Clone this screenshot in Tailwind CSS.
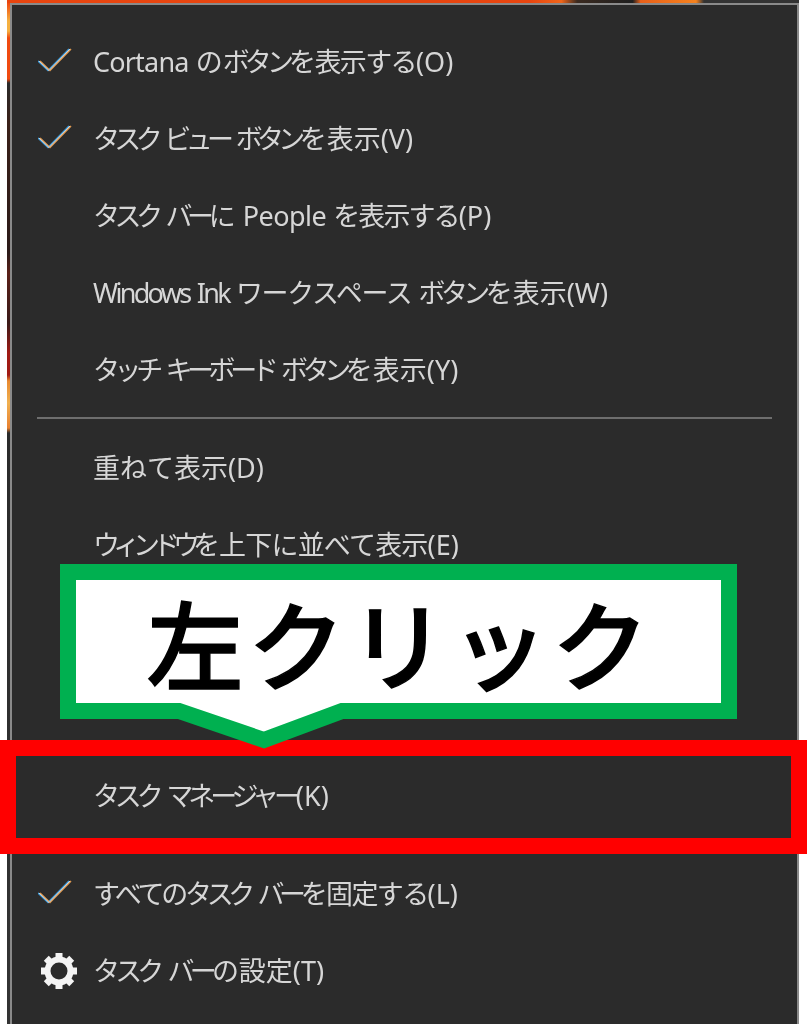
<!DOCTYPE html>
<html lang="ja">
<head>
<meta charset="utf-8">
<title>タスク バー メニュー</title>
<script src="https://cdn.jsdelivr.net/npm/@tailwindcss/browser@4"></script>
</head>
<body class="bg-white">
<div class="relative w-[807px] h-[1024px] overflow-hidden bg-white font-['Noto_Sans','Noto_Sans_CJK_JP',sans-serif]">
  <div class="h-[3px] ml-[7px] mr-[8px] bg-[linear-gradient(90deg,#e8450f_0%,#e8450f_66%,#f0651a_70%,#3a2a20_72%,#1f1f1f_79%,#e8601a_80%,#f5821e_87%,#333_88%,#333_100%)]"></div>
  <div class="flex h-[1021px] ml-[7px] mr-[8px]">
    <div class="w-[3px] shrink-0 bg-[linear-gradient(180deg,#f04a10_0px,#f5b040_18px,#f5b040_28px,#f04a10_35px,#f04a10_76px,#2a2a2a_80px,#3a2018_120px,#2b1a18_250px,#5a2018_270px,#3a1a18_320px,#a01a14_350px,#a01a14_372px,#e88a30_378px,#f0b050_400px,#e88030_425px,#2a2a2a_430px,#333_1021px)]"></div>
    <div class="flex-1 border-2 border-[#8a8a8a] border-b-0 bg-[#2b2b2b] pt-[19px] text-[#d6d6d6] text-[27px] leading-[75px]">
      <div class="relative h-[77px] pl-[81px] whitespace-nowrap blur-[0.6px]">
        <svg class="absolute left-[26px] top-[24px]" width="34" height="26" viewBox="0 0 34 26" fill="none" stroke-width="1.5"><path d="M0 13 L10 22.5 L31 1" stroke="#3f9fe0"/><path d="M2 13 L12 22.5 L33 1" stroke="#e09a50"/><path d="M1 13 L11 22.5 L32 1" stroke="#d6d6d6" stroke-width="1"/></svg>
        <span class="tracking-[-0.03em]">Cortana</span> の<span class="tracking-[-0.18em]">ボタン</span><span class="tracking-[-0.06em]">を表示する</span>(O)
      </div>
      <div class="relative h-[77px] pl-[81px] whitespace-nowrap blur-[0.6px]">
        <svg class="absolute left-[26px] top-[24px]" width="34" height="26" viewBox="0 0 34 26" fill="none" stroke-width="1.5"><path d="M0 13 L10 22.5 L31 1" stroke="#3f9fe0"/><path d="M2 13 L12 22.5 L33 1" stroke="#e09a50"/><path d="M1 13 L11 22.5 L32 1" stroke="#d6d6d6" stroke-width="1"/></svg>
        <span class="tracking-[-0.21em] [word-spacing:6px]">タスク ビュー ボタン</span>を表示(V)
      </div>
      <div class="h-[77px] pl-[81px] whitespace-nowrap blur-[0.6px]"><span class="tracking-[-0.2em] [word-spacing:6px]">タスク バー</span>に <span class="tracking-[-0.02em]">People</span> <span class="tracking-[-0.07em]">を表示する</span>(P)</div>
      <div class="h-[77px] pl-[81px] whitespace-nowrap blur-[0.6px]"><span class="tracking-[-0.1em] [word-spacing:3px]">Windows Ink</span> <span class="tracking-[-0.05em]">ワークスペース</span> <span class="tracking-[-0.17em]">ボタン</span>を表示(W)</div>
      <div class="h-[77px] pl-[81px] whitespace-nowrap blur-[0.6px]"><span class="tracking-[-0.2em] [word-spacing:6px]">タッチ キーボード ボタン</span>を表示(Y)</div>
      <div class="h-[2px] mt-[8px] mb-[11px] mx-[25px] bg-[#6e6e6e]"></div>
      <div class="h-[77px] pl-[81px] whitespace-nowrap blur-[0.6px]">重ねて表示(D)</div>
      <div class="h-[77px] pl-[81px] whitespace-nowrap blur-[0.6px]"><span class="tracking-[-0.26em]">ウィンドウ</span><span class="tracking-[-0.03em]">を上下に並べて表示</span>(E)</div>
      <div class="h-[174px]"></div>
      <div class="h-[77px] pl-[81px] whitespace-nowrap blur-[0.6px]"><span class="tracking-[-0.19em] [word-spacing:6px]">タスク マネージャー</span>(K)</div>
      <div class="h-[21px]"></div>
      <div class="relative h-[77px] pl-[81px] whitespace-nowrap blur-[0.6px]">
        <svg class="absolute left-[26px] top-[24px]" width="34" height="26" viewBox="0 0 34 26" fill="none" stroke-width="1.5"><path d="M0 13 L10 22.5 L31 1" stroke="#3f9fe0"/><path d="M2 13 L12 22.5 L33 1" stroke="#e09a50"/><path d="M1 13 L11 22.5 L32 1" stroke="#d6d6d6" stroke-width="1"/></svg>
        <span class="tracking-[-0.12em]">すべての</span><span class="tracking-[-0.2em] [word-spacing:6px]">タスク バー</span><span class="tracking-[-0.06em]">を固定する</span>(L)
      </div>
      <div class="relative h-[77px] pl-[81px] whitespace-nowrap blur-[0.6px]">
        <svg class="absolute left-[28px] top-[19px]" width="38" height="38" viewBox="-19 -19 38 38" fill="#f4f4f4">
          <circle r="11.5" fill="none" stroke="#f4f4f4" stroke-width="6"/>
          <rect x="-3.5" y="-18" width="7" height="7" />
          <rect x="-3.5" y="-18" width="7" height="7" transform="rotate(45)"/>
          <rect x="-3.5" y="-18" width="7" height="7" transform="rotate(90)"/>
          <rect x="-3.5" y="-18" width="7" height="7" transform="rotate(135)"/>
          <rect x="-3.5" y="-18" width="7" height="7" transform="rotate(180)"/>
          <rect x="-3.5" y="-18" width="7" height="7" transform="rotate(225)"/>
          <rect x="-3.5" y="-18" width="7" height="7" transform="rotate(270)"/>
          <rect x="-3.5" y="-18" width="7" height="7" transform="rotate(315)"/>
        </svg>
        <span class="tracking-[-0.18em] [word-spacing:6px]">タスク バー</span>の設定(T)
      </div>
    </div>
  </div>

  <div class="absolute left-0 top-[740px] w-[807px] h-[114px] border-[16px] border-[#ff0000]"></div>

  <div class="absolute left-[60px] top-[564px] w-[678px] h-[185px]">
    <svg class="absolute inset-0" width="678" height="185" viewBox="0 0 678 185">
      <polygon points="8,8 669,8 669,147 282,147 204,176 119,147 8,147" fill="#ffffff" stroke="#00b050" stroke-width="16" stroke-linejoin="miter"/>
    </svg>
    <div class="absolute left-[16px] top-[16px] w-[645px] h-[123px] pb-[2px] pl-[3px] flex items-center justify-center text-[97px] leading-none font-medium tracking-[0.045em] [-webkit-text-stroke:1.4px_black] text-black whitespace-nowrap font-['Noto_Sans_CJK_JP',sans-serif]">左クリック</div>
  </div>
</div>
</body>
</html>
